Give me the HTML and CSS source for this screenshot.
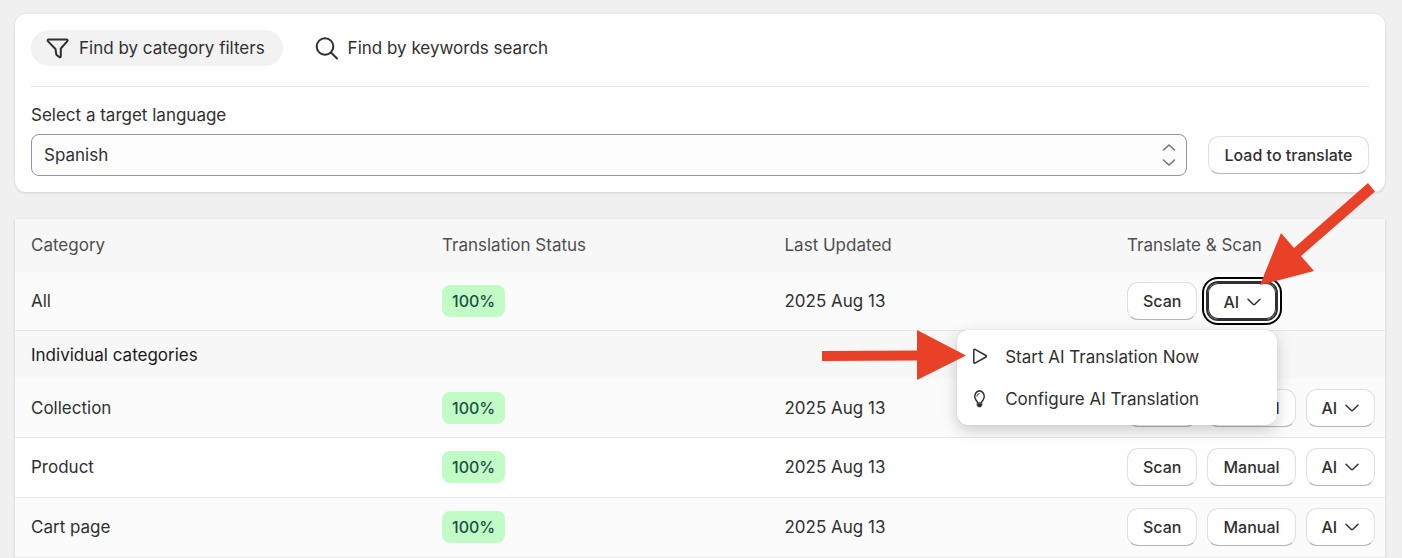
FILE: index.html
```html
<!DOCTYPE html>
<html lang="en">
<head>
<meta charset="utf-8">
<meta name="viewport" content="width=device-width, initial-scale=1">
<title>Translations</title>
<link rel="stylesheet" href="styles.css">
</head>
<body>
<svg class="sprite" aria-hidden="true">
  <symbol id="chevron" viewBox="0 0 14 8"><path d="M1 1.2 6.4 6.5a.9.9 0 0 0 1.2 0L13 1.2"/></symbol>
</svg>
<main class="page">
  <section class="card finder">
    <div class="tabs">
      <button class="tab tab-active" type="button">
        <svg class="tab-icon" viewBox="0 0 23 23"><path d="M2.600 2.500h18a1 1 0 0 1 .8 1.600L14.800 11.500v7.800a.9.9 0 0 1-1.400.8l-2.400-1.800a1.800 1.800 0 0 1-.8-1.300l-.7-5L1.800 4.100a1 1 0 0 1 .8-1.600Z"/></svg>
        Find by category filters
      </button>
      <button class="tab" type="button">
        <svg class="tab-icon" viewBox="0 0 23 23"><circle cx="10" cy="9.500" r="8.300"/><path d="m16 15.500 6 6"/></svg>
        Find by keywords search
      </button>
    </div>
    <form class="picker">
      <label for="language">Select a target language</label>
      <div class="picker-row">
        <div class="select-box">
          <select id="language"><option>Spanish</option><option>French</option><option>German</option></select>
          <svg class="select-icon" viewBox="0 0 14 26"><path d="M1.500 8 7 3 12.500 8M1.500 18 7 23l5.500-5"/></svg>
        </div>
        <button class="btn btn-load" type="button">Load to translate</button>
      </div>
    </form>
  </section>

  <table class="card grid">
    <thead>
      <tr><th class="col-name">Category</th><th class="col-mid">Translation Status</th><th class="col-mid">Last Updated</th><th class="col-actions">Translate &amp; Scan</th></tr>
    </thead>
    <tbody>
      <tr class="shaded">
        <td>All</td><td><span class="badge">100%</span></td><td>2025 Aug 13</td>
        <td class="actions-cell"><div class="actions">
          <button class="btn" type="button">Scan</button>
          <div class="menu-anchor">
            <button class="btn btn-pressed" type="button" aria-expanded="true">AI <svg class="chevron"><use href="#chevron"/></svg></button>
            <div class="menu">
              <button class="menu-item" type="button">
                <svg class="menu-icon" viewBox="0 0 16 18"><path d="M1.800 2.100v12.400a.8.8 0 0 0 1.200.7l11-6.200a.9.9 0 0 0 0-1.500L3 1.400a.8.8 0 0 0-1.200.7Z"/></svg>
                Start AI Translation Now
              </button>
              <button class="menu-item" type="button">
                <svg class="menu-icon" viewBox="0 0 16 18"><path d="M5.400 12.900v-.6c0-.9-.8-1.600-1.600-2.500A5.700 5.700 0 0 1 7.500.8a5.700 5.700 0 0 1 3.700 9c-.8.900-1.600 1.600-1.600 2.500v.6Z"/><path class="thin" d="M4.800 6.200A2.700 2.700 0 0 1 7.300 3.600"/><path class="cap" d="M5.500 14.700h4M6.500 16.200h2"/></svg>
                Configure AI Translation
              </button>
            </div>
            <svg class="arrow arrow-menu" viewBox="0 0 145 50"><path d="M0 21 95 20.500V0l49 25.500L95 50V30.500L0 31Z"/></svg>
            <svg class="arrow arrow-button" viewBox="0 0 116 104"><path d="M0 102 21 50 34 65 108 0l7 8.500L41 73 54 88Z"/></svg>
          </div>
        </div></td>
      </tr>
      <tr class="group"><th colspan="4" scope="rowgroup">Individual categories</th></tr>
      <tr class="shaded">
        <td>Collection</td><td><span class="badge">100%</span></td><td>2025 Aug 13</td>
        <td class="actions-cell"><div class="actions"><button class="btn" type="button">Scan</button><button class="btn" type="button">Manual</button><button class="btn" type="button">AI <svg class="chevron"><use href="#chevron"/></svg></button></div></td>
      </tr>
      <tr class="tall">
        <td>Product</td><td><span class="badge">100%</span></td><td>2025 Aug 13</td>
        <td class="actions-cell"><div class="actions"><button class="btn" type="button">Scan</button><button class="btn" type="button">Manual</button><button class="btn" type="button">AI <svg class="chevron"><use href="#chevron"/></svg></button></div></td>
      </tr>
      <tr class="shaded tall">
        <td>Cart page</td><td><span class="badge">100%</span></td><td>2025 Aug 13</td>
        <td class="actions-cell"><div class="actions"><button class="btn" type="button">Scan</button><button class="btn" type="button">Manual</button><button class="btn" type="button">AI <svg class="chevron"><use href="#chevron"/></svg></button></div></td>
      </tr>
    </tbody>
  </table>
</main>
</body>
</html>
```
FILE: styles.css
```css
* { box-sizing: border-box; }
body {
  margin: 0;
  background: #f0f0f0;
  color: #303030;
  font: 400 17px/24px Inter, "Liberation Sans", sans-serif;
}
button, select { font: inherit; color: inherit; cursor: pointer; }
svg { fill: none; stroke: currentColor; stroke-width: 2; stroke-linecap: round; stroke-linejoin: round; flex: none; }
.sprite { position: absolute; width: 0; height: 0; }
.page { display: flex; flex-direction: column; gap: 27px; padding: 14px 17px 0 15px; }
.card { background: #fff; box-shadow: 0 1px 3px rgba(0, 0, 0, .14); }

.finder { border-radius: 11px; padding: 16px; }
.tabs { display: flex; gap: 17px; padding-bottom: 20px; border-bottom: 1px solid #e3e3e3; }
.tab {
  display: flex; align-items: center; gap: 10px;
  height: 36px; padding: 0 18px 0 15px;
  border: 0; border-radius: 18px; background: none;
}
.tab-active { background: #f2f2f2; }
.tab-icon { width: 23px; height: 23px; }

.picker { display: flex; flex-direction: column; gap: 7px; padding-top: 16px; }
.picker-row { display: flex; align-items: center; gap: 21px; }
.select-box { position: relative; flex: 1; display: flex; }
.select-box select {
  flex: 1; height: 42px; padding: 0 40px 0 12px;
  appearance: none; border: 1px solid #8f94a8; border-radius: 8px; background: #fdfdfd;
}
.select-icon {
  position: absolute; right: 11px; top: 8px; width: 14px; height: 26px;
  stroke: #6b6f7c; stroke-width: 1.5; pointer-events: none;
}

.btn {
  display: inline-flex; align-items: center; justify-content: center; gap: 8px;
  height: 38px; padding: 0 15px;
  border: 1px solid #e0e0e0; border-bottom-color: #b5b5b5; border-radius: 11px;
  background: #fff; font-size: 16px; font-weight: 550; white-space: nowrap;
}
.btn-load { min-width: 161px; }
.chevron { width: 14px; height: 8px; stroke-width: 1.5; }

.grid { width: 100%; table-layout: fixed; border-collapse: separate; border-spacing: 0; }
.grid th, .grid td { padding: 0 16px; text-align: left; font-weight: 400; }
.grid thead th { height: 53px; padding-bottom: 2px; background: #f7f7f7; color: #4f4f4f; }
.col-name { width: 30%; }
.col-mid { width: 25%; }
.col-actions { width: 20%; }
.grid td { height: 59px; border-bottom: 1px solid #e6e6e6; }
.grid .tall td { height: 60px; padding-bottom: 1px; }
.shaded td { background: #fbfbfb; }
.grid .group th { height: 48px; background: #f7f7f7; color: #1a1a1a; }
.grid .actions-cell { padding-right: 0; }
.badge {
  display: inline-flex; align-items: center; height: 32px; padding: 0 10px;
  border-radius: 8px; background: #c1fcc6; color: #1a4f45; font-size: 16px; font-weight: 550;
  vertical-align: middle;
}
.actions { display: flex; gap: 10px; }

.menu-anchor { position: relative; }
.btn-pressed {
  border-color: #303030;
  box-shadow: inset 0 0 0 1px #303030, 0 0 0 1px #303030, 0 0 0 3px #fff, 0 0 0 5px #000;
  padding-top: 2px;
}
.menu {
  position: absolute; z-index: 2; right: 0; top: 48px; width: 320px; padding: 6px 6px 5px;
  border-radius: 11px; background: #fff;
  box-shadow: 0 5px 16px rgba(0, 0, 0, .2), 0 0 1px rgba(0, 0, 0, .2);
}
.menu-item {
  display: flex; align-items: center; gap: 17px; width: 100%; height: 42px; padding: 0 9px;
  border: 0; border-radius: 8px; background: none; text-align: left;
}
.menu-icon { width: 16px; height: 18px; stroke-width: 1.5; }
.menu-icon .thin { stroke-width: 1; }
.menu-icon .cap { stroke-width: 2; }
.arrow { position: absolute; z-index: 3; fill: #e94127; stroke: none; pointer-events: none; }
.arrow-menu { right: 310px; top: 48px; width: 145px; height: 50px; }
.arrow-button { left: 53px; bottom: 33px; width: 116px; height: 104px; }
```
